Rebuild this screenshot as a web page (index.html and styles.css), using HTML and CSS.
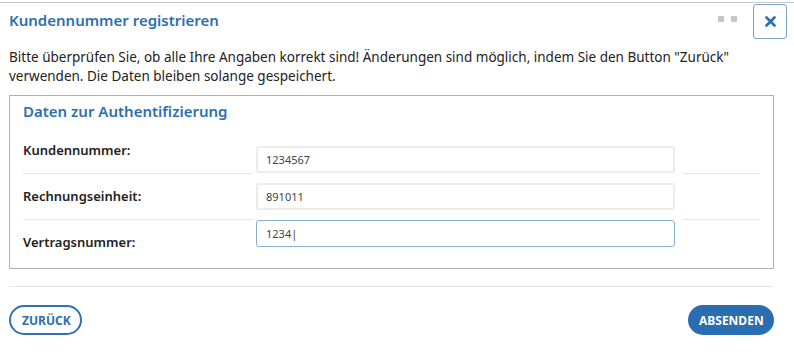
FILE: index.html
```html
<!DOCTYPE html>
<html lang="de">
<head>
  <meta charset="UTF-8">
  <meta name="viewport" content="width=device-width, initial-scale=1.0">
  <title>Kundennummer registrieren</title>
  <link rel="stylesheet" href="styles.css">
</head>
<body>
  <div class="modal">
    <div class="kopf">
      <h1 class="titel">Kundennummer registrieren</h1>
      <div class="kopf-aktionen">
        <span class="griff"><i></i><i></i></span>
        <button class="schliessen" aria-label="Schließen">
          <svg width="11" height="11" viewBox="0 0 11 11"><path d="M1.5 1.5 L9.5 9.5 M9.5 1.5 L1.5 9.5" stroke="#2c6fad" stroke-width="2.6" stroke-linecap="round"/></svg>
        </button>
      </div>
    </div>

    <p class="hinweis">Bitte überprüfen Sie, ob alle Ihre Angaben korrekt sind! Änderungen sind möglich, indem Sie den Button "Zurück" verwenden. Die Daten bleiben solange gespeichert.</p>

    <fieldset class="daten">
      <h2 class="daten-titel">Daten zur Authentifizierung</h2>

      <div class="zeile erste">
        <label class="bezeichnung">Kundennummer:</label>
        <div class="feld"><input type="text" value="1234567"></div>
        <div class="rest"></div>
      </div>
      <div class="zeile zweite">
        <label class="bezeichnung">Rechnungseinheit:</label>
        <div class="feld"><input type="text" value="891011"></div>
        <div class="rest"></div>
      </div>
      <div class="zeile letzte">
        <label class="bezeichnung">Vertragsnummer:</label>
        <div class="feld"><input type="text" class="aktiv" value="1234|"></div>
        <div class="rest"></div>
      </div>
    </fieldset>

    <div class="fuss">
      <button class="knopf zurueck">ZURÜCK</button>
      <button class="knopf absenden">ABSENDEN</button>
    </div>
  </div>
</body>
</html>
```

FILE: styles.css
```css
body {
  margin: 0;
  background-color: #fff;
  font-family: "Noto Sans", Arial, sans-serif;
  color: #222;
}
.modal {
  width: 794px;
  border-top: 1px solid #c9c9c9;
  margin-top: 2px;
}
.kopf {
  display: flex;
  justify-content: space-between;
  align-items: flex-start;
  padding: 0 7px 0 9px;
}
.titel {
  margin: 6px 0 0;
  font-size: 15px;
  line-height: 22px;
  font-weight: 600;
  color: #2c6fad;
}
.kopf-aktionen {
  display: flex;
  align-items: center;
  gap: 16px;
}
.griff {
  display: flex;
  gap: 7px;
  margin-top: -4px;
}
.griff i {
  width: 6px;
  height: 6px;
  background-color: #c6c6c6;
}
.schliessen {
  width: 34px;
  height: 35px;
  margin-top: 1px;
  border: 1px solid #7fa3c8;
  border-radius: 3px;
  background-color: #fff;
  display: flex;
  align-items: center;
  justify-content: center;
  padding: 0;
}
.hinweis {
  margin: 9px 9px 0;
  font-size: 13.5px;
  line-height: 19px;
  width: 740px;
}
.daten {
  margin: 9px 20px 0 9px;
  padding: 0 13px;
  border: 1px solid #b0b0b0;
  min-width: 0;
}
.daten-titel {
  margin: 5px 0 5px;
  font-size: 15px;
  line-height: 20px;
  font-weight: 600;
  color: #2c6fad;
}
.zeile {
  display: flex;
}
.zeile.erste {
  height: 48px;
}
.zeile.zweite {
  height: 46px;
}
.zeile.letzte {
  height: 48px;
}
.bezeichnung {
  width: 229px;
  box-sizing: border-box;
  font-size: 13px;
  line-height: 18px;
  font-weight: 600;
  border-bottom: 1px solid #e6e6e6;
}
.erste .bezeichnung {
  padding-top: 15px;
}
.zweite .bezeichnung {
  padding-top: 13px;
}
.letzte .bezeichnung {
  padding-top: 13px;
  border-bottom: none;
}
.feld {
  width: 419px;
  padding: 0 4px;
}
.erste .feld {
  padding-top: 20px;
}
.zweite .feld {
  padding-top: 9px;
}
.letzte .feld {
  padding-top: 0;
}
.rest {
  width: 77px;
  margin-left: 4px;
  box-sizing: border-box;
  border-bottom: 1px solid #e6e6e6;
}
.letzte .rest {
  border-bottom: none;
}
.feld input {
  width: 100%;
  height: 27px;
  box-sizing: border-box;
  border: 2px solid #ececec;
  border-radius: 3px;
  padding: 0 8px;
  font-family: "Noto Sans", Arial, sans-serif;
  font-size: 11px;
  color: #444;
  background-color: #fff;
}
.feld input.aktiv {
  border: 1px solid #8ab0d4;
  padding: 0 9px;
}
.fuss {
  display: flex;
  justify-content: space-between;
  align-items: center;
  margin: 17px 20px 0 9px;
  padding-top: 18px;
  border-top: 1px solid #e6e6e6;
}
.knopf {
  height: 30px;
  border-radius: 15px;
  font-family: "Noto Sans", Arial, sans-serif;
  font-size: 12px;
  font-weight: 700;
  padding: 0 11px;
  cursor: pointer;
}
.zurueck {
  border: 2px solid #2f72b5;
  background-color: #fff;
  color: #2c6fad;
  width: 73px;
}
.absenden {
  border: none;
  background-color: #2a6db0;
  color: #fff;
  width: 86px;
}
```
